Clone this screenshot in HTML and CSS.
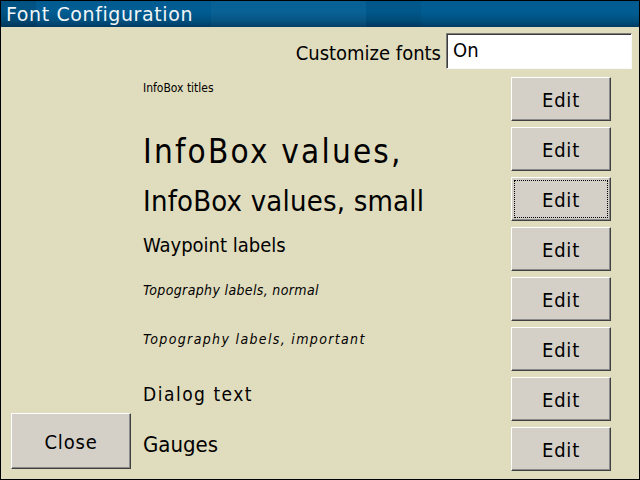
FILE: index.html
```html
<!DOCTYPE html>
<html>
<head>
<meta charset="utf-8">
<link rel="stylesheet" href="styles.css">
</head>
<body>
<div class="window">
  <div class="titlebar">Font Configuration</div>
  <div class="main">
    <div class="side">
      <div class="btn close-btn">Close</div>
    </div>
    <div class="content">
      <div class="custom-row">
        <span class="custom-label">Customize fonts</span>
        <div class="field">On</div>
      </div>
      <div class="rows">
        <div class="row"><span class="lbl l-titles">InfoBox titles</span><div class="btn edit">Edit</div></div>
        <div class="row"><span class="lbl l-values">InfoBox values,</span><div class="btn edit">Edit</div></div>
        <div class="row"><span class="lbl l-small">InfoBox values, small</span><div class="btn edit focused">Edit</div></div>
        <div class="row"><span class="lbl l-waypoint">Waypoint labels</span><div class="btn edit">Edit</div></div>
        <div class="row"><span class="lbl l-topo">Topography labels, normal</span><div class="btn edit">Edit</div></div>
        <div class="row"><span class="lbl l-topo-imp">Topography labels, important</span><div class="btn edit">Edit</div></div>
        <div class="row"><span class="lbl l-dialog">Dialog text</span><div class="btn edit">Edit</div></div>
        <div class="row"><span class="lbl l-gauges">Gauges</span><div class="btn edit">Edit</div></div>
      </div>
    </div>
  </div>
</div>
</body>
</html>
```
FILE: styles.css
```css
html, body {
  margin: 0;
  padding: 0;
  background: #000;
}
body {
  font-family: "DejaVu Sans Condensed", "DejaVu Sans", sans-serif;
  font-stretch: semi-condensed;
  color: #000;
}
.window {
  width: 640px;
  height: 480px;
  box-sizing: border-box;
  border: 1px solid #000;
  background: #e0dcbe;
  display: flex;
  flex-direction: column;
  overflow: hidden;
}
.titlebar {
  height: 26px;
  flex: none;
  box-sizing: border-box;
  padding: 1px 0 0 5px;
  font-family: "DejaVu Sans", sans-serif;
  font-stretch: normal;
  color: #f2f4f6;
  font-size: 19px;
  letter-spacing: 0.6px;
  line-height: 25px;
  background:
    linear-gradient(to right, rgba(0,0,0,0.10) 0, rgba(0,0,0,0.10) 35px, rgba(0,0,0,0) 35px, rgba(0,0,0,0) 210px, rgba(255,255,255,0.03) 210px, rgba(255,255,255,0.03) 365px, rgba(0,0,0,0.06) 365px, rgba(0,0,0,0.06) 420px, rgba(0,0,0,0) 420px),
    linear-gradient(to bottom, #005b90 0%, #005d93 40%, #00507f 75%, #003a62 100%);
}
.main {
  flex: 1;
  display: flex;
}
.side {
  width: 142px;
  flex: none;
  display: flex;
  flex-direction: column;
  justify-content: flex-end;
  padding: 0 0 10px 10px;
  box-sizing: border-box;
}
.content {
  flex: 1;
  display: flex;
  flex-direction: column;
}
.custom-row {
  display: flex;
  justify-content: flex-end;
  align-items: flex-start;
  padding: 6px 7px 0 0;
  gap: 5px;
}
.custom-label {
  font-size: 20px;
  margin-top: 8px;
}
.field {
  width: 186px;
  height: 36px;
  box-sizing: border-box;
  background: #fff;
  border-top: 1px solid #7c7c7c;
  border-left: 1px solid #7c7c7c;
  border-right: 1px solid #f8f8f8;
  border-bottom: 1px solid #f8f8f8;
  box-shadow: inset 1px 1px 0 #3c3c3c;
  font-size: 20px;
  padding: 4px 0 0 6px;
}
.rows {
  margin-top: 8px;
  display: flex;
  flex-direction: column;
}
.row {
  height: 50px;
  display: flex;
  align-items: flex-start;
  padding-right: 28px;
}
.lbl {
  flex: 1;
  white-space: nowrap;
}
.btn {
  background: #d4d0c8;
  box-sizing: border-box;
  border-top: 1px solid #fff;
  border-left: 1px solid #fff;
  border-right: 1px solid #404040;
  border-bottom: 1px solid #404040;
  box-shadow: inset -1px -1px 0 #8a8a8a;
  display: flex;
  align-items: center;
  justify-content: center;
  font-size: 20px;
  letter-spacing: 0.8px;
}
.edit {
  width: 100px;
  height: 44px;
  flex: none;
  padding-top: 2px;
}
.focused {
  outline: 1px dotted #000;
  outline-offset: -4px;
}
.close-btn {
  width: 120px;
  height: 56px;
  padding-top: 2px;
}
.l-titles { font-size: 12px; margin-top: 4px; }
.l-values { font-size: 33px; margin-top: 5px; letter-spacing: 2.2px; }
.l-small { font-size: 29px; margin-top: 7px; letter-spacing: 0.2px; }
.l-waypoint { font-size: 20px; margin-top: 6px; }
.l-topo { font-size: 14px; font-style: italic; margin-top: 5px; letter-spacing: 0.35px; }
.l-topo-imp { font-size: 14px; font-style: italic; margin-top: 4px; letter-spacing: 1.35px; }
.l-dialog { font-size: 19px; margin-top: 6px; letter-spacing: 1.5px; }
.l-gauges { font-size: 22px; margin-top: 5px; }
```
